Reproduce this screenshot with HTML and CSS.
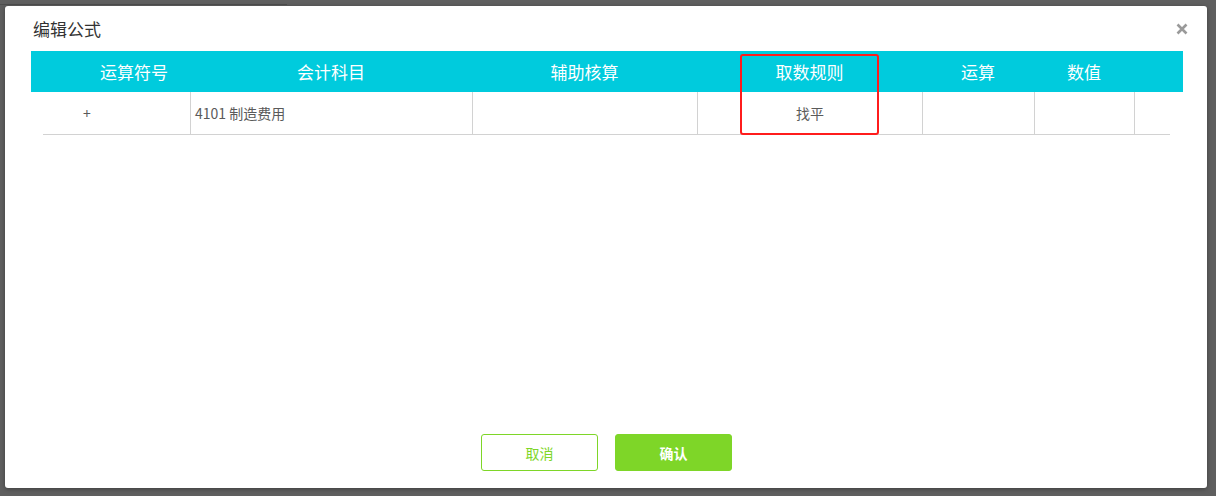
FILE: index.html
```html
<!DOCTYPE html>
<html lang="zh-CN">
<head>
<meta charset="utf-8">
<title>编辑公式</title>
<link rel="stylesheet" href="styles.css">
</head>
<body>
<div class="topline"></div>
<div class="dialog">
  <div class="title-row">
    <span class="title">编辑公式</span>
    <svg class="close" width="12" height="12" viewBox="0 0 12 12"><path d="M1.5 1.5L10.5 10.5M10.5 1.5L1.5 10.5" stroke="#9a9a9a" stroke-width="2.6" stroke-linecap="butt"/></svg>
  </div>
  <div class="thead">
    <div></div>
    <div class="th">运算符号</div>
    <div class="th">会计科目</div>
    <div class="th">辅助核算</div>
    <div class="th">取数规则</div>
    <div class="th">运算</div>
    <div class="th">数值</div>
    <div></div>
  </div>
  <div class="trow">
    <div class="td op">+</div>
    <div class="td acct">4101 制造费用</div>
    <div class="td"></div>
    <div class="td center">找平</div>
    <div class="td"></div>
    <div class="td"></div>
    <div class="td"></div>
  </div>
  <div class="highlight"></div>
  <div class="actions">
    <button class="btn btn-cancel">取消</button>
    <button class="btn btn-ok">确认</button>
  </div>
</div>
</body>
</html>
```
FILE: styles.css
```css
html, body {
  margin: 0;
  padding: 0;
}
body {
  background: #5f5f5f;
  width: 1216px;
  height: 496px;
  overflow: hidden;
  position: relative;
  font-family: "Microsoft YaHei", "Noto Sans CJK SC", "Liberation Sans", sans-serif;
}
.topline {
  height: 1px;
  width: 287px;
  margin-top: 4px;
  background: #4e4e4e;
}
.dialog {
  position: relative;
  margin: 1px 0 0 5px;
  width: 1202px;
  height: 482px;
  background: #fff;
  border-radius: 3px;
  box-shadow: 0 1px 4px rgba(0, 0, 0, 0.35);
  display: flex;
  flex-direction: column;
  box-sizing: border-box;
}
.title-row {
  height: 45px;
  display: flex;
  align-items: center;
  padding: 0 19px 0 28px;
  justify-content: space-between;
  box-sizing: border-box;
}
.title {
  font-size: 17px;
  color: #333;
  line-height: 20px;
}
.close {
  display: block;
}
.thead {
  margin-left: 26px;
  width: 1152px;
  height: 41px;
  background: #00cbdd;
  display: grid;
  grid-template-columns: 47px 112px 282px 225px 225px 112px 100px 49px;
  align-items: center;
}
.th {
  color: #fff;
  font-size: 17px;
  text-align: center;
  line-height: 20px;
}
.trow {
  margin-left: 38px;
  width: 1127px;
  height: 43px;
  display: grid;
  grid-template-columns: 147px 282px 225px 225px 112px 100px 36px;
  border-bottom: 1px solid #d2d2d2;
  box-sizing: border-box;
}
.td {
  font-size: 14px;
  color: #5a5a5a;
  display: flex;
  align-items: center;
  border-left: 1px solid #d2d2d2;
  box-sizing: border-box;
}
.td.op {
  border-left: none;
  padding-left: 40px;
}
.td.acct {
  padding-left: 4px;
}
.td.center {
  justify-content: center;
}
.highlight {
  position: absolute;
  left: 735px;
  top: 48px;
  width: 139px;
  height: 81px;
  border: 2px solid #ff1c1c;
  border-radius: 3px;
  box-sizing: border-box;
}
.actions {
  margin-top: auto;
  padding-bottom: 17px;
  display: flex;
  justify-content: center;
  gap: 17px;
  padding-left: 1px;
}
.btn {
  width: 117px;
  height: 37px;
  border-radius: 3px;
  font-family: inherit;
  font-size: 14px;
  box-sizing: border-box;
  padding: 0;
  cursor: pointer;
}
.btn-cancel {
  background: #fff;
  border: 1px solid #7ed628;
  color: #7ed628;
}
.btn-ok {
  background: #7ed628;
  border: 1px solid #7ed628;
  color: #fff;
  font-weight: bold;
}
```
